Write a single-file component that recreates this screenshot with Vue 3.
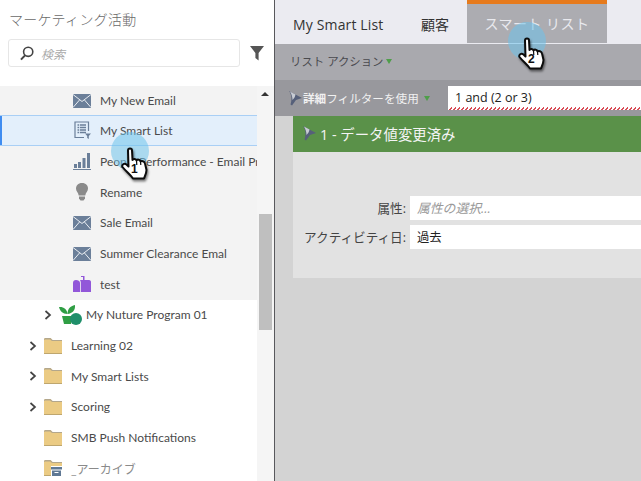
<script setup>
const rows = [
  { label: 'My New Email', icon: 'mail', level: 3, group: true },
  { label: 'My Smart List', icon: 'list', level: 3, group: true, selected: true },
  { label: 'People Performance - Email Program', icon: 'bars', level: 3, group: true },
  { label: 'Rename', icon: 'bulb', level: 3, group: true },
  { label: 'Sale Email', icon: 'mail', level: 3, group: true },
  { label: 'Summer Clearance Emal', icon: 'mail', level: 3, group: true },
  { label: 'test', icon: 'box', level: 3, group: true },
  { label: 'My Nuture Program 01', icon: 'program', level: 2, arrow: true },
  { label: 'Learning 02', icon: 'folder', level: 1, arrow: true },
  { label: 'My Smart Lists', icon: 'folder', level: 1, arrow: true },
  { label: 'Scoring', icon: 'folder', level: 1, arrow: true },
  { label: 'SMB Push Notifications', icon: 'folder', level: 1 },
  { label: '_アーカイブ', icon: 'archive', level: 1, muted: true }
]

const cursors = [
  { n: 1, cls: 'one' },
  { n: 2, cls: 'two' }
]
</script>

<template>
  <div class="page">
    <aside class="side">
      <div class="side-title">マーケティング活動</div>
      <div class="search-row">
        <div class="search">
          <svg width="14" height="15" viewBox="0 0 14 15">
            <circle cx="8.2" cy="5.8" r="4.6" fill="none" stroke="#444" stroke-width="1.6" />
            <path d="M5 9.4 L1 13.6" stroke="#444" stroke-width="2" />
          </svg>
          <span>検索</span>
        </div>
        <svg class="filter" width="14" height="16" viewBox="0 0 14 16">
          <path d="M0 1 H14 L8.6 8 V15.5 L5.4 13 V8 Z" fill="#555" />
        </svg>
      </div>

      <div class="tree">
        <div class="tree-rows">
          <div
            v-for="r in rows"
            :key="r.label"
            :class="['row', 'level' + r.level, { group: r.group, selected: r.selected, muted: r.muted, plain: r.level === 1 && !r.arrow }]"
          >
            <svg v-if="r.arrow" class="chev" width="8" height="10" viewBox="0 0 8 10">
              <path d="M1.5 1 L6 5 L1.5 9" fill="none" stroke="#444" stroke-width="1.7" />
            </svg>

            <svg v-if="r.icon === 'mail'" class="ico" width="18" height="14" viewBox="0 0 18 14">
              <rect width="18" height="14" fill="#6b7f99" />
              <path d="M0 0.5 L9 7.5 L18 0.5 M0 13.5 L6.5 6 M18 13.5 L11.5 6" fill="none" stroke="#e9edf2" stroke-width="1" />
            </svg>
            <svg v-else-if="r.icon === 'list'" class="ico" width="18" height="18" viewBox="0 0 18 18">
              <path d="M15.500 10 V1 H2 V16.500 H11" fill="none" stroke="#6b7f99" stroke-width="1.2" />
              <path d="M4.5 4 H13 M4.5 6.5 H13 M4.5 9 H13 M4.5 11.500 H13" stroke="#6b7f99" stroke-width="1.5" stroke-dasharray="1.5 .8 9" />
              <path d="M12 12.500 H18 L15.800 15 V18 L14.200 17 V15 Z" fill="#6b7f99" />
            </svg>
            <svg v-else-if="r.icon === 'bars'" class="ico" width="18" height="17" viewBox="0 0 18 17">
              <rect x="1" y="11" width="3" height="4" fill="#6b7f99" />
              <rect x="5" y="9" width="3" height="6" fill="#6b7f99" />
              <rect x="9.500" y="5" width="3" height="10" fill="#6b7f99" />
              <rect x="14" y="0" width="3" height="15" fill="#6b7f99" />
              <rect x="0" y="16" width="18" height="1" fill="#6b7f99" />
            </svg>
            <svg v-else-if="r.icon === 'bulb'" class="ico" width="18" height="18" viewBox="0 0 18 18">
              <path d="M9 0 C13 0 15 2.600 15 5.600 C15 8.500 12.600 9.500 12.300 12.500 H5.700 C5.400 9.500 3 8.500 3 5.600 C3 2.600 5 0 9 0 Z" fill="#8a8a8a" />
              <path d="M6 13.500 H12 V15.500 L10.500 17.500 H7.500 L6 15.500 Z" fill="#8a8a8a" />
            </svg>
            <svg v-else-if="r.icon === 'box'" class="ico" width="18" height="16" viewBox="0 0 18 16">
              <path d="M0 16 V7 C0 5 1 4 3 4 C5 4 7 5 7 7 V16 Z" fill="#9257d9" />
              <path d="M7 4 H10 V1 H8 V0 H11.500 V4 H16 C17.500 4 18 5 18 6 V16 H7.800 V6.500 C7.800 5.500 7.500 4.700 7 4 Z" fill="#9257d9" />
            </svg>
            <svg v-else-if="r.icon === 'program'" class="ico" width="23" height="20" viewBox="0 0 23 20">
              <path d="M0 2 C4 1.500 8 3.500 8.500 9 C3.500 9 1 6 0 2 Z" fill="#2f9e44" />
              <path d="M8.500 9 C8.500 4 11 1 16 0 C16.500 5 13.500 8.500 8.500 9 Z" fill="#2f9e44" />
              <path d="M3 11 H13 L12 19 H5 Z" fill="#2f9e44" />
              <circle cx="17" cy="14" r="6" fill="#1f8f6a" />
            </svg>
            <svg v-else-if="r.icon === 'folder' || r.icon === 'archive'" class="ico" width="18" height="16" viewBox="0 0 18 16">
              <path d="M0 16 V1 L1 0 H6.500 L8.500 2 H18 V16 Z" fill="#ebcb84" />
              <path d="M0 2 V1 L1 0 H6.500 L8.500 2 H18 V3 H8 L6 1.500 H1 Z" fill="#b3a78c" />
              <rect x="0" y="15" width="18" height="1" fill="#bea66e" />
              <g v-if="r.icon === 'archive'">
                <rect x="7" y="6" width="11" height="10" fill="#fff" />
                <rect x="7" y="7" width="11" height="2.500" fill="#5f7894" />
                <rect x="8" y="10.500" width="9" height="5.500" fill="#5f7894" />
                <rect x="10.500" y="12" width="4" height="1" fill="#fff" />
              </g>
            </svg>

            <span class="label">{{ r.label }}</span>
          </div>
        </div>
        <div class="track"><div class="thumb"></div></div>
        <div class="scroll-up"></div>
      </div>
    </aside>

    <main class="main">
      <nav class="tabs">
        <div class="tab first">My Smart List</div>
        <div class="tab second">顧客</div>
        <div class="tab active">スマート リスト</div>
      </nav>
      <div class="actions">
        <span>リスト アクション</span><i class="tri"></i>
      </div>
      <div class="advanced">
        <svg class="funnel" width="13" height="16" viewBox="0 0 13 16">
          <path d="M0 1 L13 8 L7 10 L3 15.500 L1.500 14.500 C3 10 3 5 0 1 Z" fill="#56607a" />
          <path d="M1 1.500 L6.500 4.500 C6 7 5 8.500 3.500 10 C3.500 7 2.500 4 1 1.500 Z" fill="#c8ccd4" />
        </svg>
        <span class="adv-text"><b>詳細</b>フィルターを使用</span><i class="tri"></i>
        <div class="logic">1 and (2 or 3)</div>
      </div>
      <div class="canvas">
        <section class="card">
          <header class="card-head">
            <svg class="funnel" width="13" height="16" viewBox="0 0 13 16">
              <path d="M0 1 L13 8 L7 10 L3 15.500 L1.500 14.500 C3 10 3 5 0 1 Z" fill="#56607a" />
              <path d="M1 1.500 L6.500 4.500 C6 7 5 8.500 3.500 10 C3.500 7 2.500 4 1 1.500 Z" fill="#c8ccd4" />
            </svg>
            <span>1 - データ値変更済み</span>
          </header>
          <div class="card-body">
            <div class="field">
              <label>属性:</label>
              <div class="value placeholder">属性の選択...</div>
            </div>
            <div class="field">
              <label>アクティビティ日:</label>
              <div class="value">過去</div>
            </div>
          </div>
        </section>
      </div>
    </main>

    <div v-for="c in cursors" :key="c.n" :class="['cursor', c.cls]">
      <svg class="hand" width="30" height="36" viewBox="0 0 30 36">
        <path
          d="M7 3.500 C7 0.800 11 0.800 11 3.500 L11.500 13 C12.500 11.500 15 11.500 15.500 13.500 C16.500 12 19 12.500 19.500 14.500 C20.500 13.500 23.500 14 24 16.500 L25.500 23 C25.500 26 24 29 23 31.500 L12 31.500 C9.500 27.500 5 24.500 1.500 20 C0.500 18 3 15.500 5.500 17.500 L7.500 19.500 Z"
          fill="#fff"
          stroke="#0c0c0c"
          stroke-width="2"
          stroke-linejoin="round"
        />
        <path d="M15.500 13.500 L15.800 18 M19.500 14.500 L19.800 18" stroke="#0c0c0c" stroke-width="1.200" />
      </svg>
      <span class="num">{{ c.n }}</span>
    </div>
  </div>
</template>

<style>
html, body {
  margin: 0;
  overflow: hidden;
}
</style>

<style scoped>
.page {
  position: relative;
  display: flex;
  width: 641px;
  height: 481px;
  overflow: hidden;
  background: #fff;
  font-family: "Lato", "Noto Sans CJK JP", sans-serif;
}

.side {
  display: flex;
  flex-direction: column;
  flex: none;
  width: 275px;
  box-sizing: border-box;
  border-right: 1px solid #58585c;
}

.side-title {
  height: 39px;
  padding: 10px 0 0 9px;
  box-sizing: border-box;
  font-size: 14px;
  line-height: 20px;
  letter-spacing: 0.3px;
  font-weight: 300;
  color: #6a6a6a;
}

.search-row {
  display: flex;
  align-items: center;
  gap: 10px;
  height: 47px;
  padding: 0 0 19px 8px;
  box-sizing: border-box;
}

.search {
  display: flex;
  align-items: center;
  gap: 7px;
  width: 232px;
  height: 28px;
  padding-left: 11px;
  box-sizing: border-box;
  border: 1px solid #e6e6e6;
  border-radius: 3px;
  font-size: 12px;
  font-style: italic;
  color: #aaa;
}

.tree {
  position: relative;
  display: flex;
  flex: 1;
  min-height: 0;
}

.tree-rows {
  flex: none;
  width: 257px;
  overflow: hidden;
}

.row {
  display: flex;
  align-items: center;
  height: 30.67px;
  box-sizing: border-box;
  white-space: nowrap;
  overflow: hidden;
  font-size: 12px;
  color: #4a4a4a;
}

.row:first-child {
  height: 29.67px;
}

.row.group {
  background: #f3f3f3;
}

.row.selected {
  height: 31.67px;
  margin-top: -1px;
  background: #e3effb;
  border-top: 1px solid #a9cff5;
  border-bottom: 1px solid #a9cff5;
  box-shadow: inset 2px 0 0 #3f8cf0;
}

.row.muted .label {
  color: #8a8a8a;
}

.level3 {
  padding-left: 73px;
}

.level2 {
  padding-left: 44px;
}

.level1 {
  padding-left: 29px;
}

.level1.plain {
  padding-left: 44px;
}

.chev {
  flex: none;
  margin-right: 7px;
}

.ico {
  flex: none;
  margin-right: 9px;
}

.level2 .ico {
  margin-right: 4px;
}

.track {
  flex: none;
  width: 17px;
  background: #f5f5f5;
}

.thumb {
  width: 13px;
  height: 116px;
  margin: 128px 0 0 2px;
  background: #bfbfbf;
}

.scroll-up {
  position: absolute;
  top: 6px;
  left: 261px;
  border-left: 4px solid transparent;
  border-right: 4px solid transparent;
  border-bottom: 4px solid #333;
}

.main {
  display: flex;
  flex-direction: column;
  flex: 1;
  min-width: 0;
  font-family: "Open Sans", "Noto Sans CJK JP", sans-serif;
}

.tabs {
  display: flex;
  flex: none;
  height: 44px;
  padding-left: 18px;
  box-sizing: border-box;
  background: #ebebf1;
  font-size: 14px;
  color: #333;
}

.tab {
  padding-top: 15px;
  line-height: 20px;
  box-sizing: border-box;
}

.tab.first {
  width: 128px;
  letter-spacing: 0.15px;
}

.tab.second {
  width: 46px;
}

.tab.active {
  width: 140px;
  height: 43px;
  padding-top: 10px;
  border-top: 4px solid #e67a1c;
  text-align: center;
  background: #acacb1;
  color: #e9e9ee;
  letter-spacing: 0.5px;
}

.actions {
  display: flex;
  align-items: center;
  flex: none;
  height: 36px;
  padding-left: 15px;
  padding-bottom: 2px;
  box-sizing: border-box;
  background: #a9a9ae;
  font-size: 11.4px;
  color: #4a4a4e;
}

.tri {
  display: block;
  margin-left: 2px;
  border-left: 3px solid transparent;
  border-right: 3px solid transparent;
  border-top: 5px solid #4f9e4a;
}

.advanced {
  display: flex;
  align-items: center;
  flex: none;
  height: 36px;
  padding-left: 14px;
  box-sizing: border-box;
  background: #98989d;
  font-size: 11.6px;
  color: #f1f1f1;
}

.adv-text b {
  font-weight: 600;
}

.advanced .tri {
  margin-left: 5px;
}

.funnel {
  flex: none;
  margin-right: 1px;
}

.logic {
  flex: none;
  width: 193px;
  height: 24px;
  margin-left: auto;
  padding-left: 7px;
  box-sizing: border-box;
  line-height: 24px;
  font-size: 12.5px;
  color: #222;
  background-color: #fff;
  background-image:
    linear-gradient(135deg, #fff 50%, #d8505a 50%, #d8505a 75%, #fff 75%),
    linear-gradient(45deg, #fff 50%, #d8505a 50%, #d8505a 75%, #fff 75%);
  background-size: 4px 3px;
  background-position: 0 100%, 2px 100%;
  background-repeat: repeat-x;
}

.canvas {
  flex: 1;
  min-height: 0;
  padding-left: 18px;
  background: #d3d3d3;
}

.card {
  background: #e2e2e2;
  height: 162px;
}

.card-head {
  display: flex;
  align-items: center;
  gap: 3px;
  height: 36px;
  padding: 0 0 2px 10px;
  box-sizing: border-box;
  background: #5a9149;
  font-size: 14.4px;
  color: #f4f4f4;
}

.card-body {
  display: flex;
  flex-direction: column;
  gap: 5px;
  padding-top: 44px;
}

.field {
  display: flex;
  height: 24px;
}

.field label {
  flex: none;
  width: 117px;
  padding-right: 4px;
  box-sizing: border-box;
  text-align: right;
  line-height: 25px;
  font-size: 12.6px;
  color: #444;
  white-space: nowrap;
}

.value {
  flex: 1;
  padding-left: 7px;
  line-height: 25px;
  font-size: 12.3px;
  color: #222;
  background: #fff;
}

.value.placeholder {
  font-style: italic;
  font-size: 12.8px;
  color: #999;
}

.cursor {
  position: absolute;
  width: 38px;
  height: 38px;
  border-radius: 50%;
  background: rgba(110, 195, 235, 0.55);
}

.cursor.one {
  left: 111px;
  top: 132px;
}

.cursor.two {
  left: 508px;
  top: 22px;
}

.hand {
  position: absolute;
  left: 10px;
  top: 15px;
  filter: drop-shadow(1px 2px 1px rgba(0, 0, 0, 0.5));
}

.num {
  position: absolute;
  left: 20px;
  top: 31px;
  font-size: 12px;
  line-height: 12px;
  font-weight: 700;
  color: #111;
  font-family: "Liberation Sans", sans-serif;
}
</style>
